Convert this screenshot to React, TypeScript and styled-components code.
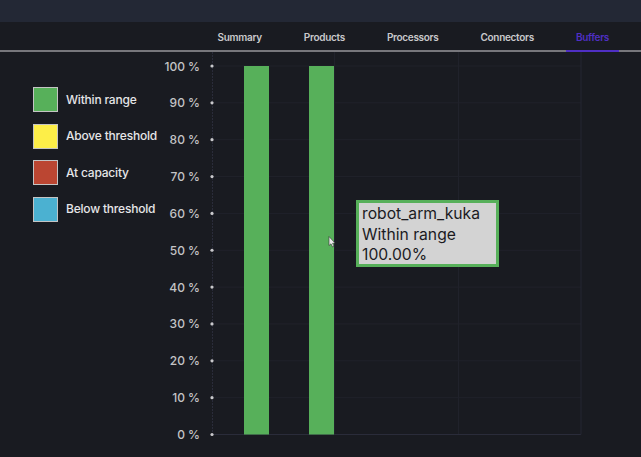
import React from 'react'
import styled, { createGlobalStyle } from 'styled-components'

const GlobalStyle = createGlobalStyle`
  html, body {
    margin: 0;
    padding: 0;
    width: 641px;
    height: 457px;
    overflow: hidden;
    background: #191b21;
    font-family: "Inter", "Liberation Sans", sans-serif;
  }
`

const Page = styled.div`
  width: 641px;
  height: 457px;
  display: flex;
  flex-direction: column;
  background: #191b21;
`
const TopBar = styled.div`
  height: 22px;
  background: #232835;
`
const Nav = styled.nav`
  height: 28px;
  display: flex;
  justify-content: flex-end;
  gap: 22px;
  padding-right: 22px;
  border-bottom: 2px solid #77777c;
`
const Tab = styled.div<{ $active?: boolean }>`
  height: ${p => (p.$active ? '30px' : '28px')};
  padding: 1px 10px 0;
  box-sizing: border-box;
  display: flex;
  align-items: center;
  font-size: 10px;
  font-weight: 600;
  letter-spacing: -0.3px;
  white-space: nowrap;
  color: ${p => (p.$active ? '#4f2fc4' : '#c9c9cc')};
  border-bottom: ${p => (p.$active ? '2px solid #4f2fc4' : 'none')};
`
const Body = styled.div`
  flex: 1;
  display: flex;
  position: relative;
`
const Legend = styled.div`
  width: 160px;
  box-sizing: border-box;
  padding: 35px 0 0 33px;
  display: flex;
  flex-direction: column;
  gap: 11.5px;
`
const LegendRow = styled.div`
  display: flex;
  align-items: center;
  gap: 8px;
`
const Swatch = styled.div<{ $color: string }>`
  width: 25px;
  height: 25px;
  box-sizing: border-box;
  background: ${p => p.$color};
  border: 1px solid #c4c4c4;
`
const LegendLabel = styled.span`
  font-size: 12px;
  font-weight: 500;
  letter-spacing: -0.2px;
  color: #e6e6e8;
  white-space: nowrap;
  margin-top: -1px;
`
const Chart = styled.svg`
  display: block;
  flex: none;
`
const AxisLabel = styled.text`
  font-family: "Inter", "Liberation Sans", sans-serif;
  font-size: 12px;
  font-weight: 500;
  fill: #c4c4c6;
  text-anchor: end;
`
const Tooltip = styled.div`
  position: absolute;
  left: 356px;
  top: 148px;
  width: 143px;
  height: 67px;
  box-sizing: border-box;
  border: 3px solid #57b05a;
  background: #d3d3d3;
  color: #1b1b1f;
  padding: 1px 0 0 3px;
  font-size: 15.7px;
  line-height: 20.7px;
  white-space: nowrap;
`
const Cursor = styled.svg`
  position: absolute;
  left: 328px;
  top: 184px;
`

const LEGEND = [
  { label: 'Within range', color: '#57b05a' },
  { label: 'Above threshold', color: '#fdee48' },
  { label: 'At capacity', color: '#bb4632' },
  { label: 'Below threshold', color: '#4bb1d1' },
]
const TABS = ['Summary', 'Products', 'Processors', 'Connectors', 'Buffers']
const TICKS = [100, 90, 80, 70, 60, 50, 40, 30, 20, 10, 0]

// chart svg starts at x=160, y=52 on the page
const TOP = 14
const BOTTOM = 382.5
const LEFT = 52
const RIGHT = 421
const STEP = (BOTTOM - TOP) / 10

const BarChart = () => (
  <Chart width={481} height={405} viewBox="0 0 481 405">
    {[174, 298].map(x => (
      <line key={x} x1={x + 0.5} x2={x + 0.5} y1={0} y2={BOTTOM} stroke="#20222b" />
    ))}
    {TICKS.map((t, i) => {
      const y = TOP + i * STEP
      return (
        <line
          key={t}
          x1={LEFT}
          x2={RIGHT}
          y1={y}
          y2={y}
          stroke={t === 0 ? '#2a2c3a' : '#20222b'}
        />
      )
    })}
    <line x1={LEFT + 0.5} x2={LEFT + 0.5} y1={0} y2={BOTTOM} stroke="#2a2c3a" strokeDasharray="2 1" />
    <line x1={RIGHT} x2={RIGHT} y1={0} y2={BOTTOM} stroke="#252733" />
    {[84, 149].map(x => (
      <rect key={x} x={x} y={TOP} width={25} height={BOTTOM - TOP} fill="#57b05a" />
    ))}
    {TICKS.map((t, i) => {
      const y = TOP + i * STEP
      return (
        <g key={t}>
          <circle cx={LEFT} cy={y} r={1.6} fill="#c9c9cc" />
          <AxisLabel x={40} y={y + 4.5}>{`${t} %`}</AxisLabel>
        </g>
      )
    })}
  </Chart>
)

const App = () => (
  <Page>
    <GlobalStyle />
    <TopBar />
    <Nav>
      {TABS.map(t => (
        <Tab key={t} $active={t === 'Buffers'}>{t}</Tab>
      ))}
    </Nav>
    <Body>
      <Legend>
        {LEGEND.map(l => (
          <LegendRow key={l.label}>
            <Swatch $color={l.color} />
            <LegendLabel>{l.label}</LegendLabel>
          </LegendRow>
        ))}
      </Legend>
      <BarChart />
      <Cursor width="8" height="12" viewBox="0 0 8 12">
        <path d="M1 0.5 L1 9.5 L3 7.8 L4.6 11 L6 10.3 L4.6 7.3 L7 7.1 Z" fill="#e8e8e8" stroke="#333" strokeWidth="0.6" />
      </Cursor>
      <Tooltip>
        <div>robot_arm_kuka</div>
        <div>Within range</div>
        <div>100.00%</div>
      </Tooltip>
    </Body>
  </Page>
)

export default App
